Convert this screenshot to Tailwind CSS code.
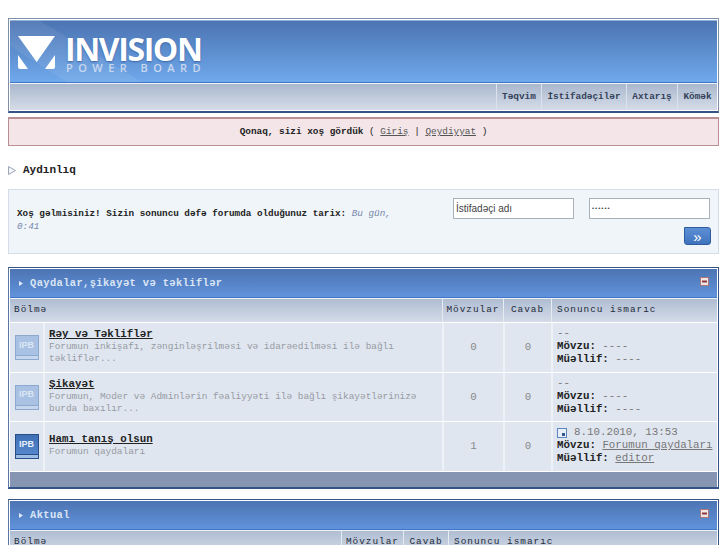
<!DOCTYPE html>
<html><head><meta charset="utf-8"><script src="https://cdn.jsdelivr.net/npm/@tailwindcss/browser@4"></script></head>
<body class="bg-white overflow-hidden h-[545px] font-['Liberation_Mono',monospace] text-[10px] text-[#222]">
<div class="px-2 pt-[18px] w-[727px]">
  <!-- header -->
  <div class="border border-[#7d8ea8] border-b-[#345487] border-b-2 p-px h-[95px] flex flex-col">
    <div class="relative h-[63px] shrink-0 bg-gradient-to-b from-[#4c74b2] to-[#6fa9ec] border-t border-[#8fb0dc] border-b border-b-[#3f77c4] overflow-hidden">
      <svg class="absolute left-0 top-0" width="130" height="63"><polygon points="0,0 30,0 130,60 130,63 60,63 0,25" fill="#ffffff" opacity="0.07"/></svg>
      <div class="absolute left-[8px] top-[15px]">
        <svg width="38" height="35" viewBox="0 0 38 35"><path d="M0 0H37L18.700 26ZM0 19L10 33H2Q0 33 0 31ZM37 19L27 33H35Q37 33 37 31Z" fill="#ffffff"/></svg>
      </div>
      <div class="absolute left-[55px] top-[8px] font-['Open_Sans',sans-serif] font-bold text-[32px] leading-[40px] tracking-[-1.4px] text-white [text-shadow:0_1px_2px_#3c66a5]">INVISION</div>
      <div class="absolute left-[56px] top-[40px] font-['Open_Sans',sans-serif] font-semibold text-[11px] leading-[14px] tracking-[5.45px] text-[#c9d8ef] whitespace-nowrap">POWER BOARD</div>
    </div>
    <div class="flex-1 border-t border-white/70 bg-gradient-to-b from-[#aab8cd] to-[#d5dce8] flex justify-end">
      <div class="flex h-full font-bold text-[9.4px] text-[#33415a]">
        <div class="w-[45px] border-l border-[#dbe2ec] flex items-center justify-center">Təqvim</div>
        <div class="w-[85px] border-l border-[#dbe2ec] flex items-center justify-center">İstifadəçilər</div>
        <div class="w-[51px] border-l border-[#dbe2ec] flex items-center justify-center">Axtarış</div>
        <div class="w-[40px] border-l border-[#dbe2ec] flex items-center justify-center">Kömək</div>
      </div>
    </div>
  </div>
  <!-- guest -->
  <div class="mt-[4px] h-[29px] border border-[#b98f95] border-t-2 bg-[#f3e5e8] flex items-center justify-center text-[9.4px] font-bold text-[#222]">
    <span>Qonaq, sizi xoş gördük <span class="font-normal">( <span class="underline text-[#555]">Giriş</span> | <span class="underline text-[#555]">Qeydiyyat</span> )</span></span>
  </div>
  <!-- nav -->
  <div class="mt-[18px] h-[12px] flex items-center gap-[7px] font-bold text-[11px] text-[#222]">
    <svg width="8" height="9" viewBox="0 0 8 9"><path d="M.5.5L7.500 4.500L.5 8.500Z" fill="#f4f6f9" stroke="#9aa5b5"/></svg>
    <span>Aydınlıq</span>
  </div>
  <!-- welcome -->
  <div class="mt-[13px] h-[65px] border border-[#d5dde8] bg-[#f0f5fa] flex pl-[8px] pr-[9px]">
    <div class="w-[388px] shrink-0 pt-[17px] font-bold text-[9.3px] leading-[13px]">Xoş gəlmisiniz! Sizin sonuncu dəfə forumda olduğunuz tarix: <span class="font-normal italic text-[#7487a8]">Bu gün, 0:41</span></div>
    <div class="ml-[48px] pt-[8px] flex-1 flex flex-col">
      <div class="flex gap-[15px]">
        <div class="w-[121px] h-[21px] bg-white border border-[#a9b0b8] pl-[2px] flex items-center font-['Liberation_Sans',sans-serif] text-[10px] text-[#444]">İstifadəçi adı</div>
        <div class="w-[121px] h-[21px] bg-white border border-[#a9b0b8] pl-[2px] flex items-center font-['Liberation_Sans',sans-serif] text-[6px] tracking-[1px] text-[#444]">••••••</div>
      </div>
      <div class="mt-[8px] self-end mr-[-1px] w-[27px] h-[18px] rounded-[3px] rounded-tl-none border border-[#2f5c9e] bg-gradient-to-b from-[#5d8fd6] to-[#3f74bd] flex items-center justify-center text-white text-[15px] leading-none font-['Liberation_Sans',sans-serif]">»</div>
    </div>
  </div>
  <!-- category 1 -->
  <div class="mt-[13px] border border-[#345487] border-b-2 border-l-[#5a76a3] p-px pb-0">
    <div class="h-[29px] pt-[1px] bg-gradient-to-b from-[#4d74b3] to-[#6093dc] border-b border-[#3f77c4] flex items-center pl-[9px] pr-[8px]">
      <svg width="4" height="5" viewBox="0 0 4 5" class="mr-[7px]"><path d="M0 0L4 2.500L0 5Z" fill="#dfe9f7"/></svg>
      <span class="font-bold text-[10.400px] tracking-[0.4px] text-[#dbe6f5]">Qaydalar,şikayət və təkliflər</span>
      <svg class="ml-auto mb-[4px]" width="9" height="9" viewBox="0 0 9 9"><rect x=".5" y=".5" width="8" height="8" fill="#f2e4e7" stroke="#a77"/><rect x="2" y="3.500" width="5" height="2" fill="#8a3a3a"/></svg>
    </div>
    <div class="grid grid-cols-[432px_61px_48px_167px] h-[24px] border-t border-white/60 bg-gradient-to-b from-[#b0bdd2] to-[#d3dbe8] text-[9.400px] tracking-[1px] text-[#222b3a]">
      <div class="px-[4px] flex items-center">Bölmə</div>
      <div class="border-l border-[#e6ebf2] flex items-center justify-center">Mövzular</div>
      <div class="border-l border-[#e6ebf2] flex items-center justify-center">Cavab</div>
      <div class="border-l border-[#e6ebf2] px-[5px] flex items-center">Sonuncu ismarıc</div>
    </div>
    <!-- row -->
    <div class="grid grid-cols-[33px_399px_61px_48px_167px] h-[50px] bg-[#e0e6f0] border-t border-white">
      <div class="flex items-center justify-center"><div class="w-[24px] h-[25px] bg-[#a9c1e2] border border-[#8ea9cf] flex flex-col"><span class="flex-1 flex items-center justify-center font-['Liberation_Sans',sans-serif] text-[9px] font-bold text-[#dbe6f5]">IPB</span><span class="h-[4px] border-t border-[#8ea9cf] bg-[#c6d6ec]"></span></div></div>
      <div class="border-l-2 border-[#eef2f7] pl-[4px] pt-[5px]">
        <div class="font-bold text-[10.800px] leading-[13px] underline">Rəy və Təkliflər</div>
        <div class="text-[9.430px] text-[#969ba3] leading-[12px]">Forumun inkişafı, zənginləşrilməsi və idarəedilməsi ilə bağlı təkliflər...</div>
      </div>
      <div class="border-l-2 border-[#eef2f7] flex items-center justify-center text-[10.800px] text-[#888]">0</div>
      <div class="border-l-2 border-[#eef2f7] flex items-center justify-center text-[10.800px] text-[#888]">0</div>
      <div class="border-l-2 border-[#eef2f7] pl-[4px] pt-[4px] text-[10.800px] leading-[13px] text-[#777]">
        <div>--</div><div><b class="text-[#222]">Mövzu:</b> ----</div><div><b class="text-[#222]">Müəllif:</b> ----</div>
      </div>
    </div>
    <div class="grid grid-cols-[33px_399px_61px_48px_167px] h-[49px] bg-[#e0e6f0] border-t border-white">
      <div class="flex items-center justify-center"><div class="w-[24px] h-[25px] bg-[#a9c1e2] border border-[#8ea9cf] flex flex-col"><span class="flex-1 flex items-center justify-center font-['Liberation_Sans',sans-serif] text-[9px] font-bold text-[#dbe6f5]">IPB</span><span class="h-[4px] border-t border-[#8ea9cf] bg-[#c6d6ec]"></span></div></div>
      <div class="border-l-2 border-[#eef2f7] pl-[4px] pt-[5px]">
        <div class="font-bold text-[10.800px] leading-[13px] underline">Şikayət</div>
        <div class="text-[9.430px] text-[#969ba3] leading-[12px]">Forumun, Moder və Adminlərin fəaliyyəti ilə bağlı şikayətlərinizə burda baxılır...</div>
      </div>
      <div class="border-l-2 border-[#eef2f7] flex items-center justify-center text-[10.800px] text-[#888]">0</div>
      <div class="border-l-2 border-[#eef2f7] flex items-center justify-center text-[10.800px] text-[#888]">0</div>
      <div class="border-l-2 border-[#eef2f7] pl-[4px] pt-[4px] text-[10.800px] leading-[13px] text-[#777]">
        <div>--</div><div><b class="text-[#222]">Mövzu:</b> ----</div><div><b class="text-[#222]">Müəllif:</b> ----</div>
      </div>
    </div>
    <div class="grid grid-cols-[33px_399px_61px_48px_167px] h-[50px] bg-[#e0e6f0] border-t border-white">
      <div class="flex items-center justify-center"><div class="w-[24px] h-[25px] bg-gradient-to-b from-[#3f6fb5] to-[#5a8ad0] border border-[#2a4f86] flex flex-col"><span class="flex-1 flex items-center justify-center font-['Liberation_Sans',sans-serif] text-[9px] font-bold text-[#e6eefa]">IPB</span><span class="h-[4px] border-t border-[#2a4f86] bg-[#9dbce6]"></span></div></div>
      <div class="border-l-2 border-[#eef2f7] pl-[4px] pt-[11px]">
        <div class="font-bold text-[10.800px] leading-[13px] underline">Hamı tanış olsun</div>
        <div class="text-[9.430px] text-[#969ba3] leading-[12px]">Forumun qaydaları</div>
      </div>
      <div class="border-l-2 border-[#eef2f7] flex items-center justify-center text-[10.800px] text-[#888]">1</div>
      <div class="border-l-2 border-[#eef2f7] flex items-center justify-center text-[10.800px] text-[#888]">0</div>
      <div class="border-l-2 border-[#eef2f7] pl-[4px] pt-[4px] text-[10.800px] leading-[13px] text-[#777] whitespace-nowrap">
        <div class="flex items-center gap-[7px]"><svg width="10" height="10" viewBox="0 0 10 10"><rect x=".5" y=".5" width="9" height="9" fill="#e8eff8" stroke="#5c86bf"/><rect x="5" y="5" width="3" height="3" fill="#34588f"/></svg><span>8.10.2010, 13:53</span></div>
        <div><b class="text-[#222]">Mövzu:</b> <span class="underline">Forumun qaydaları</span></div>
        <div><b class="text-[#222]">Müəllif:</b> <span class="underline">editor</span></div>
      </div>
    </div>
    <div class="h-[16px] bg-[#8595b2] border-t border-white"></div>
  </div>
  <!-- category 2 -->
  <div class="mt-[10px] border border-[#345487] border-l-[#5a76a3] p-px">
    <div class="h-[29px] pt-[1px] bg-gradient-to-b from-[#4d74b3] to-[#6093dc] border-b border-[#3f77c4] flex items-center pl-[9px] pr-[8px]">
      <svg width="4" height="5" viewBox="0 0 4 5" class="mr-[7px]"><path d="M0 0L4 2.500L0 5Z" fill="#dfe9f7"/></svg>
      <span class="font-bold text-[10.400px] tracking-[0.4px] text-[#dbe6f5]">Aktual</span>
      <svg class="ml-auto mb-[4px]" width="9" height="9" viewBox="0 0 9 9"><rect x=".5" y=".5" width="8" height="8" fill="#f2e4e7" stroke="#a77"/><rect x="2" y="3.500" width="5" height="2" fill="#8a3a3a"/></svg>
    </div>
    <div class="grid grid-cols-[331px_62px_45px_270px] h-[24px] border-t border-white/60 bg-gradient-to-b from-[#b0bdd2] to-[#d3dbe8] text-[9.400px] tracking-[1px] text-[#222b3a]">
      <div class="px-[4px] flex items-center">Bölmə</div>
      <div class="border-l border-[#e6ebf2] flex items-center justify-center">Mövzular</div>
      <div class="border-l border-[#e6ebf2] flex items-center justify-center">Cavab</div>
      <div class="border-l border-[#e6ebf2] px-[5px] flex items-center">Sonuncu ismarıc</div>
    </div>
  </div>
</div>
</body></html>
